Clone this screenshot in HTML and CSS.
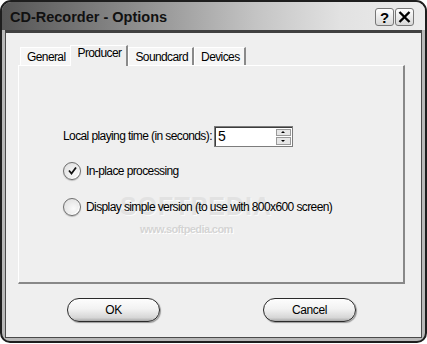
FILE: index.html
```html
<html>
  <head>
    <link rel="stylesheet" href="styles.css">
  </head>
  <body>
    <div class="window">
      <div class="titlebar">
        <span class="title">CD-Recorder - Options</span>
        <div class="capbtns">
          <span class="capbtn help">?</span>
          <span class="capbtn close">
            <svg width="13" height="12" viewBox="0 0 13 12"><path d="M1.5 1 L11.5 11 M11.5 1 L1.5 11" stroke="#000" stroke-width="2.4"/></svg>
          </span>
        </div>
      </div>
      <div class="client">
        <div class="tabs">
          <div class="tab">General</div>
          <div class="tab active">Producer</div>
          <div class="tab">Soundcard</div>
          <div class="tab">Devices</div>
        </div>
        <div class="panel">
          <div class="timerow">
            <span>Local playing time (in seconds):</span>
            <div class="spin">
              <span class="spinval">5</span>
              <div class="spinbtns">
                <span class="sb"><i class="up"></i></span>
                <span class="sb"><i class="down"></i></span>
              </div>
            </div>
          </div>
          <div class="radio first">
            <span class="dot on">
              <svg width="9" height="9" viewBox="0 0 9 9"><path d="M1 4.5 L3.5 7.5 L8 1.5" stroke="#111" stroke-width="1.8" fill="none"/></svg>
            </span>
            <span>In-place processing</span>
          </div>
          <div class="radio second">
            <span class="dot"></span>
            <span>Display simple version (to use with 800x600 screen)</span>
          </div>
          <div class="wm-big">SOFTPEDIA</div>
          <div class="wm-url">www.softpedia.com</div>
        </div>
        <div class="buttons">
          <button class="pill">OK</button>
          <button class="pill">Cancel</button>
        </div>
      </div>
    </div>
  </body>
</html>
```
FILE: styles.css
```css
*{
  margin: 0;
  padding: 0;
  box-sizing: border-box;
}
body{
  background: #fff;
  font-family: "Liberation Sans", Arial, sans-serif;
  font-size: 12px;
  letter-spacing: -0.6px;
  color: #000;
}
.window{
  width: 427px;
  height: 343px;
  border: 2px solid #1e1e1e;
  border-radius: 11px 11px 10px 10px;
  background: #b8b8b8;
  overflow: hidden;
  display: flex;
  flex-direction: column;
}
.titlebar{
  height: 28px;
  display: flex;
  align-items: center;
  justify-content: space-between;
  padding: 0 11px 0 8px;
  background: linear-gradient(to right, #555 0%, #8a8a8a 30%, #c4c4c4 60%, #e2e2e2 80%, #ececec 100%);
}
.title{
  font-size: 14.5px;
  letter-spacing: 0;
  font-weight: bold;
  color: #111;
  margin-top: 1px;
}
.capbtns{
  display: flex;
  gap: 1px;
  margin-top: 2px;
}
.capbtn{
  width: 19px;
  height: 18px;
  border: 1px solid #777;
  border-radius: 3px;
  background: linear-gradient(#fff, #d8d8d8);
  display: flex;
  align-items: center;
  justify-content: center;
  font-weight: bold;
  font-size: 15px;
  letter-spacing: 0;
  color: #000;
}
.client{
  flex: 1;
  margin: 0 3px 3px 3px;
  border: 1px solid #4a4a4a;
  border-top: 3px solid #404040;
  background: #efefef;
  padding: 12px 0 0 12px;
}
.tabs{
  display: flex;
  align-items: flex-end;
  height: 20px;
  margin-left: 2px;
}
.tab{
  height: 18px;
  padding: 2px 4px 0 6px;
  background: #f6f6f6;
  border-top: 1px solid #fff;
  border-left: 1px solid #fff;
  border-right: 2px solid #8a8a8a;
}
.tab.active{
  margin-left: -2px;
  padding: 0 5px 0 7px;
  background: #efefef;
  position: relative;
  z-index: 1;
  margin-bottom: -1px;
  height: 21px;
}
.panel{
  position: relative;
  width: 387px;
  height: 219px;
  border-top: 1px solid #fff;
  border-left: 1px solid #fff;
  border-right: 2px solid #888;
  border-bottom: 2px solid #888;
  padding: 60px 0 0 44px;
}
.timerow{
  display: flex;
  align-items: center;
  height: 20px;
  gap: 2px;
}
.spin{
  width: 79px;
  height: 21px;
  background: #fff;
  border: 1px solid #7c7c7c;
  box-shadow: inset 1px 1px #3c3c3c;
  display: flex;
  justify-content: space-between;
  padding: 2px 1px 1px 3px;
}
.spinval{
  font-size: 14px;
  line-height: 14px;
}
.spinbtns{
  display: flex;
  flex-direction: column;
  gap: 1px;
}
.sb{
  width: 15px;
  height: 8px;
  background: #e6e6e6;
  border: 1px solid #999;
  display: flex;
  align-items: center;
  justify-content: center;
}
.sb i{
  width: 0;
  height: 0;
  border-left: 2px solid transparent;
  border-right: 2px solid transparent;
}
.sb i.up{ border-bottom: 2px solid #000; }
.sb i.down{ border-top: 2px solid #000; }
.radio{
  display: flex;
  align-items: center;
  gap: 5px;
  height: 17px;
}
.radio.first{ margin-top: 16px; }
.radio.second{ margin-top: 19px; position: relative; z-index: 1; }
.dot{
  width: 18px;
  height: 18px;
  border-radius: 50%;
  border: 1px solid #6e6e6e;
  background: radial-gradient(circle at 60% 60%, #fafafa 0%, #e4e4e4 70%, #c8c8c8 100%);
  box-shadow: inset -1px -1px 1px #fff, 0 1px 1px #bbb;
  display: flex;
  align-items: center;
  justify-content: center;
}
.wm-big{
  position: absolute;
  left: 101px;
  top: 126px;
  font-size: 25px;
  font-weight: bold;
  color: #e2e2e2;
  letter-spacing: 1px;
  text-shadow: 1px 1px #fafafa;
}
.wm-url{
  position: absolute;
  left: 121px;
  top: 157px;
  font-size: 11px;
  font-weight: bold;
  color: #d4d4d4;
  text-shadow: 1px 1px #fff;
}
.buttons{
  display: flex;
  gap: 103px;
  padding: 14px 0 0 49px;
}
.pill{
  width: 93px;
  height: 24px;
  border: 1px solid #2a2a2a;
  border-radius: 12px;
  background: linear-gradient(#fdfdfd 0%, #f2f2f2 45%, #d6d6d6 85%, #a8a8a8 100%);
  box-shadow: 1px 1px 1px #999;
  font-family: "Liberation Sans", Arial, sans-serif;
  font-size: 12px;
  letter-spacing: -0.4px;
  color: #000;
}
```
